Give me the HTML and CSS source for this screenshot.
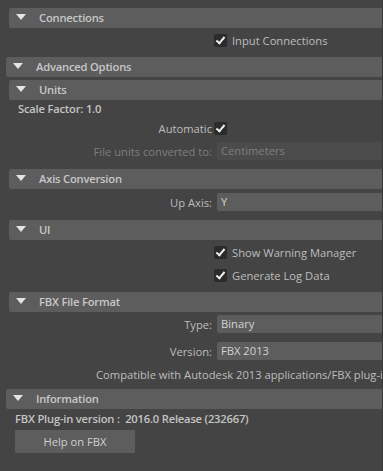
FILE: index.html
```html
<!DOCTYPE html>
<html>
<head>
  <meta charset="UTF-8">
  <title>FBX Export Options</title>
  <link rel="stylesheet" href="styles.css">
</head>
<body>
  <div class="panel">

    <!-- Connections -->
    <div class="frame conn-frame">
      <div class="frame-header"><span class="arrow"></span><span class="frame-title">Connections</span></div>
      <div class="frame-body">
        <div class="row check-row">
          <span class="spacer"></span>
          <span class="checkbox checked"></span>
          <span class="check-label">Input Connections</span>
        </div>
      </div>
    </div>

    <!-- Advanced Options -->
    <div class="frame adv-frame">
      <div class="frame-header"><span class="arrow"></span><span class="frame-title">Advanced Options</span></div>
      <div class="frame-body adv-body">

        <div class="frame child units-frame">
          <div class="frame-header"><span class="arrow"></span><span class="frame-title">Units</span></div>
          <div class="frame-body">
            <div class="plain-row scale-row">Scale Factor: 1.0</div>
            <div class="row auto-row">
              <span class="label">Automatic</span>
              <span class="checkbox checked"></span>
            </div>
            <div class="row field-row">
              <span class="label disabled">File units converted to:</span>
              <span class="field disabled">Centimeters</span>
            </div>
          </div>
        </div>

        <div class="frame child axis-frame">
          <div class="frame-header"><span class="arrow"></span><span class="frame-title">Axis Conversion</span></div>
          <div class="frame-body">
            <div class="row field-row">
              <span class="label">Up Axis:</span>
              <span class="field">Y</span>
            </div>
          </div>
        </div>

        <div class="frame child ui-frame">
          <div class="frame-header"><span class="arrow"></span><span class="frame-title">UI</span></div>
          <div class="frame-body">
            <div class="row check-row">
              <span class="spacer"></span>
              <span class="checkbox checked"></span>
              <span class="check-label">Show Warning Manager</span>
            </div>
            <div class="row check-row">
              <span class="spacer"></span>
              <span class="checkbox checked"></span>
              <span class="check-label">Generate Log Data</span>
            </div>
          </div>
        </div>

        <div class="frame child format-frame">
          <div class="frame-header"><span class="arrow"></span><span class="frame-title">FBX File Format</span></div>
          <div class="frame-body">
            <div class="row field-row">
              <span class="label">Type:</span>
              <span class="field">Binary</span>
            </div>
            <div class="row field-row version-row">
              <span class="label">Version:</span>
              <span class="field">FBX 2013</span>
            </div>
            <div class="compat-row">Compatible with Autodesk 2013 applications/FBX plug-ins</div>
          </div>
        </div>

      </div>
    </div>

    <!-- Information -->
    <div class="frame info-frame">
      <div class="frame-header"><span class="arrow"></span><span class="frame-title">Information</span></div>
      <div class="frame-body info-body">
        <div class="plain-row info-row">FBX Plug-in version :&nbsp; 2016.0 Release (232667)</div>
        <button class="btn">Help on FBX</button>
      </div>
    </div>

  </div>
</body>
</html>
```

FILE: styles.css
```css
body {
  margin: 0;
  background-color: #444444;
  font-family: "Open Sans", "Liberation Sans", sans-serif;
  font-size: 11.2px;
  color: #bdbdbd;
}

.panel {
  width: 383px;
  height: 471px;
  overflow: hidden;
  border-right: 1px solid #393939;
  padding-top: 8px;
  box-sizing: border-box;
}

/* Frames */
.frame {
  margin-left: 6px;
}

.frame.child {
  margin-left: 3px;
}

.frame.conn-frame {
  margin-left: 9px;
}

.frame-header {
  height: 20px;
  background-color: #5d5d5d;
  border-radius: 2px 0 0 2px;
  display: flex;
  align-items: center;
  font-weight: 600;
  letter-spacing: -0.2px;
  color: #c8c8c8;
}

.arrow {
  width: 0;
  height: 0;
  margin-left: 7px;
  margin-right: 13px;
  margin-top: -3px;
  border-left: 5.5px solid transparent;
  border-right: 5.5px solid transparent;
  border-top: 6px solid #e4e4e4;
}

.frame-title {
  line-height: 20px;
}

.frame-body {
  padding: 1px 0 5px 0;
}

.adv-body {
  padding: 3px 0 0 0;
}

.units-frame .frame-body {
  padding: 0 0 7px 9px;
}

.axis-frame .frame-body {
  padding: 2px 0 7px 0;
}

.format-frame .frame-body {
  padding: 1px 0 3px 0;
}

/* Rows */
.row {
  display: flex;
  align-items: center;
  height: 23px;
}

.units-frame .row {
  margin-left: -9px;
}

.spacer {
  width: 205px;
  flex-shrink: 0;
}

.label {
  width: 203px;
  flex-shrink: 0;
  text-align: right;
  white-space: nowrap;
}

.label.disabled {
  color: #7f7f7f;
}

.plain-row {
  height: 17px;
  display: flex;
  align-items: center;
  font-weight: 600;
  letter-spacing: -0.2px;
  color: #c4c4c4;
}

.field-row {
  height: 22px;
}

.field {
  flex: 1;
  height: 18px;
  line-height: 18px;
  margin-left: 5px;
  padding-left: 4px;
  background-color: #5d5d5d;
  border-radius: 2px 0 0 2px;
  color: #d2d2d2;
}

.field.disabled {
  background-color: #4b4b4b;
  color: #7f7f7f;
}

.version-row {
  margin-top: 5px;
}

.compat-row {
  height: 24px;
  display: flex;
  align-items: center;
  padding-left: 87px;
  white-space: nowrap;
  overflow: hidden;
}

/* Checkbox */
.checkbox {
  width: 13px;
  height: 13px;
  flex-shrink: 0;
  background-color: #2b2b2b;
  border-radius: 2px;
  position: relative;
}

.checkbox.checked::after {
  content: "";
  position: absolute;
  left: 4px;
  top: 1px;
  width: 3px;
  height: 7px;
  border-right: 2px solid #eeeeee;
  border-bottom: 2px solid #eeeeee;
  transform: rotate(40deg);
}

.auto-row .checkbox {
  margin-left: 2px;
}

.check-label {
  margin-left: 5px;
  white-space: nowrap;
}

/* Information */
.info-body {
  padding: 0 0 0 9px;
}

.info-row {
  height: 18px;
  color: #c4c4c4;
}

.btn {
  margin-top: 3px;
  width: 120px;
  height: 23px;
  border: none;
  border-radius: 1px;
  background-color: #5d5d5d;
  color: #cfcfcf;
  font-family: inherit;
  font-size: 11.2px;
  padding: 0;
}
```
